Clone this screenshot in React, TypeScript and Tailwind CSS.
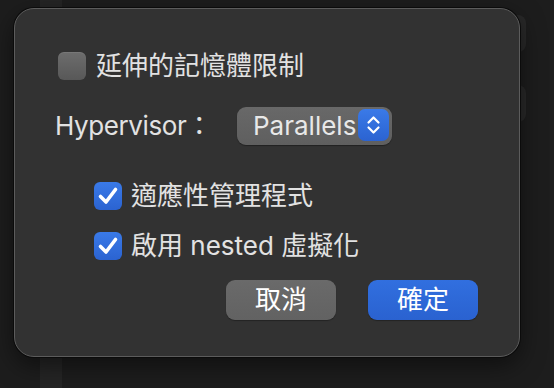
import React from "react";

const font = { fontFamily: '"Inter", "Noto Sans CJK TC", sans-serif' };

function Check({ checked }: { checked: boolean }) {
  if (!checked) {
    return (
      <div className="w-[28px] h-[28px] shrink-0 rounded-[6px] bg-gradient-to-b from-[#6d6d6d] to-[#585858] shadow-[inset_0_1px_0_rgba(255,255,255,0.08)]" />
    );
  }
  return (
    <div className="w-[28px] h-[28px] shrink-0 rounded-[6px] bg-gradient-to-b from-[#3a7ae8] to-[#2b63d1] flex items-center justify-center">
      <svg width="28" height="28" viewBox="0 0 28 28" fill="none">
        <path d="M6.5 14.5 L12 20 L21.5 7.5" stroke="white" strokeWidth="3.6" strokeLinecap="round" strokeLinejoin="round" />
      </svg>
    </div>
  );
}

export default function App() {
  return (
    <div className="relative w-[554px] h-[388px] bg-[#1d1d1d] overflow-hidden" style={font}>
      {/* window behind the sheet */}
      <div className="flex h-full">
        <div className="w-[40px]" />
        <div className="w-[22px] bg-[#252525]" />
        <div className="flex-1 flex flex-col items-end pr-[28px] pt-[15px] gap-[33px]">
          <div className="w-[40px] h-[37px] rounded-[8px] bg-[#292929]" />
          <div className="w-[40px] h-[37px] rounded-[8px] bg-[#292929]" />
        </div>
      </div>

      {/* sheet */}
      <div className="absolute left-[14px] top-[8px] w-[506px] h-[349px] rounded-[20px] bg-[#323232] border border-[#5c5c5c] shadow-[0_0_0_1px_#0b0b0b,0_8px_24px_rgba(0,0,0,0.5)] flex flex-col text-[#e2e2e2] text-[26px] leading-none">
        <div className="flex items-center h-[28px] mt-[43px] ml-[43px]">
          <Check checked={false} />
          <span className="ml-[10px]">延伸的記憶體限制</span>
        </div>

        <div className="flex items-center h-[38px] mt-[27px] ml-[40px]">
          <span className="w-[182px] tracking-[-0.4px]">Hypervisor：</span>
          <div className="relative flex items-center w-[155px] h-[38px] rounded-[9px] bg-gradient-to-b from-[#686868] to-[#5f5f5f] shadow-[0_1px_1px_rgba(0,0,0,0.35)] pl-[16px]">
            <span className="text-[#e8e8e8]">Parallels</span>
            <div className="absolute right-[3px] top-[2px] w-[31px] h-[32px] rounded-[7px] bg-gradient-to-b from-[#3a7ae8] to-[#2b63d1] flex items-center justify-center">
              <svg width="31" height="32" viewBox="0 0 31 32" fill="none">
                <path d="M10.5 13.5 L15.5 8.5 L20.5 13.5" stroke="white" strokeWidth="2.2" strokeLinecap="round" strokeLinejoin="round" />
                <path d="M10.5 18.5 L15.5 23.5 L20.5 18.5" stroke="white" strokeWidth="2.2" strokeLinecap="round" strokeLinejoin="round" />
              </svg>
            </div>
          </div>
        </div>

        <div className="flex items-center h-[28px] mt-[37px] ml-[79px]">
          <Check checked />
          <span className="ml-[9px]">適應性管理程式</span>
        </div>

        <div className="flex items-center h-[28px] mt-[22px] ml-[79px]">
          <Check checked />
          <span className="ml-[9px]">啟用 nested 虛擬化</span>
        </div>

        <div className="flex justify-end gap-[32px] mt-[20px] mr-[41px]">
          <button className="w-[110px] h-[40px] rounded-[9px] bg-gradient-to-b from-[#6a6a6a] to-[#626262] text-white text-[26px] shadow-[0_1px_1px_rgba(0,0,0,0.3)]">
            取消
          </button>
          <button className="w-[110px] h-[40px] rounded-[9px] bg-gradient-to-b from-[#316fdf] to-[#2a62d0] text-white text-[26px] shadow-[0_1px_1px_rgba(0,0,0,0.3)]">
            確定
          </button>
        </div>
      </div>
    </div>
  );
}
